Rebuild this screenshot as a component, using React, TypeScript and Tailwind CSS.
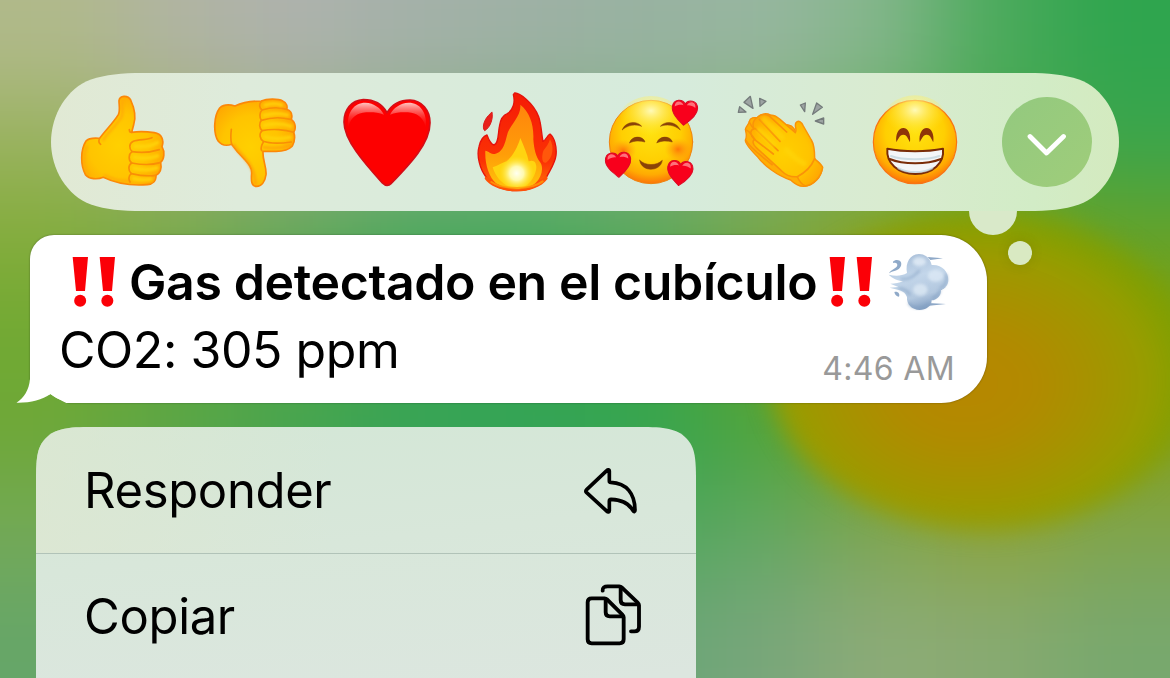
import React from 'react';

const mesh: string[][] = [
  ['#b0b98a', '#b0b4a2', '#aeb2ad', '#a4b1a9', '#9eb1a5', '#98b2a1', '#97b6a0', '#84b68b', '#4caa5c', '#2fa54e'],
  ['#98b25c', '#a0b070', '#98ae80', '#8aad80', '#80ae80', '#80b080', '#80b070', '#66ad60', '#48a84c', '#3ca54c'],
  ['#82ac3a', '#78a948', '#60a656', '#46a85a', '#44a85a', '#58a758', '#78a548', '#8ea420', '#8ca208', '#68a228'],
  ['#70a932', '#60a740', '#50a64a', '#40a550', '#38a552', '#38a54c', '#5ea52c', '#909a00', '#a09400', '#82a00a'],
  ['#6ea838', '#5aa644', '#46a54e', '#33a456', '#31a456', '#34a550', '#4ca440', '#7ca01c', '#909a00', '#84a01c'],
  ['#74a958', '#60a760', '#50a660', '#50a660', '#50a660', '#50a65c', '#62a864', '#7ea656', '#8da542', '#7fa550'],
  ['#66a668', '#60a66c', '#60a66c', '#60a66c', '#60a670', '#68a676', '#78a67b', '#8dab78', '#88aa72', '#78a86e'],
];

function Wallpaper() {
  return (
    <svg className="absolute inset-0 h-full w-full" viewBox="0 0 1170 678" aria-hidden="true">
      <defs>
        <filter id="meshBlur" filterUnits="userSpaceOnUse" x="-300" y="-300" width="1770" height="1278" colorInterpolationFilters="sRGB">
          <feGaussianBlur stdDeviation="46" />
        </filter>
        <filter id="glowBlur" filterUnits="userSpaceOnUse" x="600" y="50" width="800" height="628" colorInterpolationFilters="sRGB">
          <feGaussianBlur stdDeviation="12" />
        </filter>
        <radialGradient id="glow" gradientUnits="userSpaceOnUse" cx="0" cy="0" r="1" gradientTransform="translate(966 384) scale(225 170)">
          <stop offset="0" stopColor="#b78700" />
          <stop offset="0.3" stopColor="#b28a00" />
          <stop offset="0.6" stopColor="#a49400" />
          <stop offset="0.82" stopColor="#979d00" />
          <stop offset="1" stopColor="#7f9f00" stopOpacity="0.9" />
        </radialGradient>
      </defs>
      <g filter="url(#meshBlur)">
        {mesh.map((row, r) =>
          row.map((c, i) => {
            const left = i === 0 ? -250 : i * 117;
            const right = i === 9 ? 1420 : (i + 1) * 117 + 1;
            const top = r === 0 ? -250 : r * 97;
            const bottom = r === 6 ? 928 : (r + 1) * 97 + 1;
            return <rect key={`${r}-${i}`} x={left} y={top} width={right - left} height={bottom - top} fill={c} />;
          }),
        )}
      </g>
      <ellipse cx="984" cy="371" rx="214" ry="158" fill="url(#glow)" filter="url(#glowBlur)" />
    </svg>
  );
}

function SharedPaints() {
  return (
    <svg className="absolute h-0 w-0" aria-hidden="true">
      <defs>
        <radialGradient id="skin" cx="0.45" cy="0.55" r="0.6">
          <stop offset="0" stopColor="#ffd000" />
          <stop offset="0.6" stopColor="#ffc400" />
          <stop offset="1" stopColor="#ffa602" />
        </radialGradient>
        <radialGradient id="face" cx="0.5" cy="0.38" r="0.64">
          <stop offset="0" stopColor="#ffe210" />
          <stop offset="0.55" stopColor="#ffcf02" />
          <stop offset="0.8" stopColor="#ffab02" />
          <stop offset="1" stopColor="#fc6a0a" />
        </radialGradient>
        <radialGradient id="shine" cx="0.5" cy="0.3" r="0.5">
          <stop offset="0" stopColor="#fffab8" />
          <stop offset="1" stopColor="#ffe930" stopOpacity="0" />
        </radialGradient>
        <radialGradient id="blush">
          <stop offset="0" stopColor="#ff6a08" stopOpacity="0.85" />
          <stop offset="1" stopColor="#ff9a10" stopOpacity="0" />
        </radialGradient>
        <linearGradient id="gloss" x1="0" y1="0" x2="0" y2="1">
          <stop offset="0" stopColor="#ffc4c0" />
          <stop offset="1" stopColor="#ff2a24" stopOpacity="0" />
        </linearGradient>
        <radialGradient id="core">
          <stop offset="0" stopColor="#fffff0" />
          <stop offset="0.4" stopColor="#fffab0" />
          <stop offset="1" stopColor="#ffe82a" stopOpacity="0" />
        </radialGradient>
        <linearGradient id="flameOuter" x1="0" y1="0" x2="0" y2="1">
          <stop offset="0" stopColor="#f51a05" />
          <stop offset="0.7" stopColor="#fb3205" />
          <stop offset="1" stopColor="#ff7a08" />
        </linearGradient>
        <linearGradient id="flameMid" x1="0" y1="0" x2="0" y2="1">
          <stop offset="0" stopColor="#ff840c" />
          <stop offset="0.6" stopColor="#ff9e08" />
          <stop offset="1" stopColor="#ffc40a" />
        </linearGradient>
        <linearGradient id="puff" x1="0.3" y1="0" x2="0.6" y2="1">
          <stop offset="0" stopColor="#a9bfd9" />
          <stop offset="0.4" stopColor="#c3d6ea" />
          <stop offset="0.75" stopColor="#b3c8df" />
          <stop offset="1" stopColor="#7f9cc0" />
        </linearGradient>
        <filter id="soft" x="-0.3" y="-0.3" width="1.6" height="1.6" colorInterpolationFilters="sRGB">
          <feGaussianBlur stdDeviation="4" />
        </filter>
        <filter id="softLine" x="-0.3" y="-0.6" width="1.6" height="2.2" colorInterpolationFilters="sRGB">
          <feGaussianBlur stdDeviation="3" />
        </filter>
      </defs>
    </svg>
  );
}

function Cell({ box, label, children }: { box: string; label: string; children: React.ReactNode }) {
  return (
    <button className="h-[138px] w-[132px] shrink-0" aria-label={label}>
      <svg className="block h-full w-full" viewBox={box} fill="none" strokeLinecap="round" strokeLinejoin="round">
        {children}
      </svg>
    </button>
  );
}

function ThumbUp() {
  return (
    <Cell box="-9 -21 396 414" label="Me gusta">
      <path fill="url(#skin)" stroke="#fc8708" strokeWidth="5" d="M177 62C179 46 203 44 212 60C223 84 230 108 221 134L215 157C236 154 262 155 283 158C305 161 313 180 306 200C315 215 313 238 302 247C305 262 302 278 288 286C289 303 278 313 262 314C226 317 176 314 130 292C112 299 88 298 77 285C61 256 61 210 78 183C88 172 104 174 119 175C136 151 160 129 175 104C181 92 177 76 177 62Z" />
      <path stroke="#ffa808" strokeWidth="7" opacity=".8" filter="url(#softLine)" d="M188 62C184 78 190 94 186 108C170 138 144 154 130 180M80 200C68 230 70 262 84 282M135 286C160 300 180 304 208 304" />
      <g stroke="#f98e06" strokeWidth="5">
        <path d="M276 173C264 181 238 177 220 184C206 190 207 206 216 215C206 222 204 240 215 249C204 256 204 272 214 281C204 288 206 300 210 306" />
        <path d="M216 215C242 219 276 216 298 209M215 249C242 254 278 255 300 248M214 281C240 287 268 289 286 286" />
        <path d="M118 177C115 184 118 190 122 193M215 157C210 157 208 153 208 149" />
      </g>
      <g stroke="#ffd50a" strokeWidth="12" opacity=".8" filter="url(#softLine)">
        <path d="M226 199C248 201 276 198 292 188M224 232C248 236 274 235 292 228M224 265C246 270 272 270 290 264M222 296C240 300 258 300 272 298" />
      </g>
    </Cell>
  );
}

function ThumbDown() {
  return (
    <Cell box="387 -21 396 414" label="No me gusta">
      <path fill="url(#skin)" stroke="#fc8708" strokeWidth="5" d="M479 84C492 72 511 74 525 78C548 67 580 63 604 63C620 56 654 55 668 63C680 69 683 80 680 88C696 94 697 108 694 118C708 128 708 148 701 157C706 170 703 186 697 198C686 210 668 214 648 214L609 214C607 240 620 260 618 284C615 306 604 319 590 319C574 319 573 304 575 280C576 262 564 250 551 235C535 220 524 206 515 193C500 198 484 195 475 184C459 160 461 108 479 84Z" />
      <g stroke="#f98e06" strokeWidth="5">
        <path d="M604 65C596 72 598 84 606 90C598 98 598 112 604 121C596 130 598 144 606 152C596 162 600 178 610 184C632 192 666 190 694 186" />
        <path d="M606 90C632 82 660 82 680 88M604 121C632 112 666 112 692 118M606 152C636 146 676 148 701 157" />
        <path d="M515 193C511 178 512 164 514 148M610 186C604 196 602 206 605 212" />
      </g>
      <g stroke="#ffd50a" strokeWidth="11" opacity=".8" filter="url(#softLine)">
        <path d="M616 75C632 70 652 70 664 75M614 106C638 99 664 100 682 105M614 136C640 130 672 132 692 139M616 171C640 178 668 177 690 172" />
      </g>
      <path stroke="#ff9a0a" strokeWidth="10" opacity=".6" filter="url(#softLine)" d="M522 196C540 224 584 250 586 310M612 202C640 206 670 204 692 196" />
    </Cell>
  );
}

function Heart() {
  return (
    <Cell box="3 -21 396 414" label="Corazón">
      <path fill="#fd0000" stroke="#d30d17" strokeWidth="5" d="M201 98C186 71 160 59 130 59C93 61 72 90 72 126C72 180 132 248 187 309C196 318 206 318 214 310C270 252 330 190 330 128C330 90 305 61 270 60C242 60 216 73 201 98Z" />
      <path fill="url(#gloss)" d="M84 144C80 96 102 68 136 68C162 69 182 84 192 104C172 96 148 96 128 98C104 102 90 118 84 144Z" />
      <path fill="url(#gloss)" d="M318 144C322 96 300 68 266 68C240 69 220 84 210 104C230 96 254 96 274 98C298 102 312 118 318 144Z" />
    </Cell>
  );
}

function Fire() {
  return (
    <Cell box="399 -21 396 414" label="Fuego">
      <path fill="url(#flameOuter)" stroke="#e5120c" strokeWidth="4" d="M584 39C598 38 640 68 656 110C664 132 664 160 669 184C679 180 681 166 690 162C703 172 711 200 708 226C705 250 690 270 680 291C664 318 624 332 590 332C554 332 516 320 498 291C480 268 469 228 477 200C481 182 491 168 501 165C505 176 511 192 522 195C536 192 534 162 538 140C541 118 550 105 562 101C580 90 586 66 580 44Z" />
      <path fill="#e8201a" stroke="#dc1a1c" strokeWidth="3" d="M516 97C520 114 512 142 494 152C486 144 491 122 504 108Z" />
      <path fill="#ff5208" d="M496 288L494 296C512 322 554 334 590 334C626 334 664 322 683 296L680 288C660 312 520 312 496 288Z" />
      <path fill="url(#flameMid)" d="M601 74C629 96 642 134 640 178C642 208 648 232 660 246C672 262 666 290 646 310C620 330 560 330 528 310C506 290 494 250 496 212C506 214 512 222 524 222C554 216 556 180 564 156C574 132 604 106 601 74Z" />
      <path fill="#ff5c0c" opacity=".9" d="M690 178C704 200 698 236 678 248C666 252 664 230 670 212C678 202 686 192 690 178Z" />
      <path fill="#ffd410" d="M601 174C612 200 622 222 626 244C644 236 652 252 648 270C644 292 626 322 594 326C556 324 528 296 518 262C536 256 546 248 560 244C578 228 592 204 601 174Z" />
      <ellipse cx="590" cy="280" rx="52" ry="52" fill="url(#core)" />
      <path stroke="#ff9c08" strokeWidth="6" opacity=".8" d="M514 306C550 330 634 330 668 304" />
    </Cell>
  );
}

function MiniHeart({ x, y, turn }: { x: number; y: number; turn: number }) {
  return (
    <g transform={`translate(${x} ${y}) rotate(${turn})`}>
      <path fill="#f8001c" stroke="#dc0a26" strokeWidth="3" d="M0 -24C-8 -39 -36 -39 -38 -13C-39 8 -16 26 -1 40C16 27 39 8 38 -13C36 -38 8 -39 0 -24Z" />
      <path fill="#ff8d93" opacity=".8" d="M-31 -14C-33 -33 -12 -36 -5 -20C-12 -22 -24 -20 -31 -14ZM31 -14C33 -33 12 -36 5 -20C12 -22 24 -20 31 -14Z" />
    </g>
  );
}

function LovingFace() {
  return (
    <Cell box="-15 -21 396 414" label="Cara con corazones">
      <circle cx="183" cy="186" r="125" fill="url(#face)" stroke="#ee8410" strokeWidth="3" />
      <ellipse cx="183" cy="122" rx="98" ry="74" fill="url(#shine)" />
      <ellipse cx="100" cy="212" rx="40" ry="34" fill="url(#blush)" />
      <ellipse cx="264" cy="208" rx="40" ry="34" fill="url(#blush)" />
      <g fill="#8a4308" stroke="#8a4308" strokeWidth="1.500">
        <path d="M97 149C104 128 136 118 155 139C136 132 116 134 97 149Z" />
        <path d="M270 149C262 128 230 118 211 139C230 132 252 134 270 149Z" />
        <path d="M119 188C124 166 160 166 165 186C150 182 134 182 119 188Z" />
        <path d="M201 188C206 166 242 166 247 186C232 182 216 182 201 188Z" />
        <path d="M149 241C166 258 200 258 217 241C212 276 154 278 149 241Z" />
      </g>
      <MiniHeart x={284} y={96} turn={4} />
      <MiniHeart x={85} y={252} turn={-4} />
      <MiniHeart x={270} y={277} turn={5} />
    </Cell>
  );
}

function Clap() {
  return (
    <Cell box="381 -21 396 414" label="Aplausos">
      <path fill="#ffae04" stroke="#fa8f08" strokeWidth="4" d="M574 140C586 130 604 134 612 146L640 200L696 260C698 290 670 318 642 319C624 320 612 310 602 300C560 286 520 254 504 232C486 214 464 192 466 180C472 170 468 158 466 148C468 138 476 134 478 124C480 112 492 112 504 112C514 98 532 100 542 105Z" />
      <path fill="url(#skin)" stroke="#fa9308" strokeWidth="4.500" d="M502 112C516 98 530 104 538 108C550 100 562 112 570 118L616 158C622 148 612 138 618 128C626 118 636 128 640 138L664 180C674 196 674 218 674 236C684 246 694 252 698 262C694 292 668 314 646 318C634 312 626 300 622 290C602 292 586 284 574 272L498 202C488 192 486 182 494 178C480 166 478 150 492 146C484 130 494 116 502 112Z" />
      <g stroke="#fa9308" strokeWidth="5">
        <path d="M508 118L570 184M496 146L564 212M494 179L550 222M540 110L590 156" />
        <path d="M622 290C642 280 664 260 674 236M478 126C482 134 486 142 492 146M468 150C478 152 484 164 494 178M468 182C480 204 520 232 546 254" />
      </g>
      <path stroke="#ffd60a" strokeWidth="16" opacity=".6" filter="url(#soft)" d="M590 210C612 232 628 246 642 250M522 118L576 172M508 150L552 192" />
      <g fill="#9da4a3" stroke="#747b7b" strokeWidth="4">
        <path d="M481 49L462 67L489 85ZM509 55L528 64L510 79ZM449 80L445 97L468 96Z" />
        <path d="M680 69L697 82L668 103ZM646 69L631 75L644 95ZM701 114L701 132L676 123Z" />
      </g>
    </Cell>
  );
}

function Grin() {
  return (
    <Cell box="-3 9 396 414" label="Sonrisa">
      <circle cx="195" cy="216" r="125" fill="url(#face)" stroke="#f87414" strokeWidth="3.500" />
      <ellipse cx="195" cy="150" rx="96" ry="74" fill="url(#shine)" />
      <path fill="#8e3508" d="M139 216C136 192 146 174 160 174C174 174 183 192 180 216C175 210 172 194 160 194C148 194 144 210 139 216Z" />
      <path fill="#8e3508" d="M209 216C206 192 216 174 230 174C244 174 253 192 250 216C245 210 242 194 230 194C218 194 214 210 209 216Z" />
      <path fill="#f4f6f8" stroke="#7a2c08" strokeWidth="6" d="M112 236C160 246 230 246 279 236C284 280 248 312 196 312C144 312 108 280 112 236Z" />
      <path stroke="#7a2c08" strokeWidth="6" d="M119 267C160 284 230 284 273 267" />
      <path stroke="#b9d0d8" strokeWidth="6" opacity=".65" d="M123 258C160 271 230 271 268 258M145 295C174 310 218 310 247 295" />
    </Cell>
  );
}

function DoubleBang({ className }: { className: string }) {
  return (
    <svg className={className} viewBox="217 106 132 153" role="img" aria-label="‼️" fill="#fb0007">
      <path d="M219 109H265L256 211H229ZM300 109H346L337 211H310Z" />
      <circle cx="241.500" cy="240" r="18" />
      <circle cx="323" cy="240" r="18" />
    </svg>
  );
}

function Dash() {
  return (
    <svg className="ml-[15px] mt-[5px] h-[58px] w-[62px]" viewBox="299 84 186 174" role="img" aria-label="💨">
      <path fill="#8fa9c8" d="M418 96L464 100L426 105ZM420 234L473 237L416 243ZM440 190L472 187L450 200Z" />
      <path fill="#8fa9c8" d="M314 110C320 103 334 103 338 112C342 124 332 136 318 138C310 140 306 142 302 145C308 134 320 132 326 124C330 114 320 112 314 114ZM318 201C328 198 336 206 332 215C324 214 320 210 318 201Z" />
      <path fill="url(#puff)" d="M301 149C320 154 340 154 356 144C350 112 366 88 392 87C414 87 426 102 430 120C462 118 480 140 480 164C480 180 470 190 458 194C460 212 444 226 430 226C430 244 412 255 394 255C370 254 354 238 356 216C352 206 346 200 334 196L304 188L330 186L306 176C320 176 334 174 344 168C328 168 312 160 301 149Z" />
      <g filter="url(#soft)">
        <ellipse cx="393" cy="110" rx="20" ry="13" fill="#e0ebf6" opacity=".85" />
        <ellipse cx="442" cy="152" rx="24" ry="18" fill="#dbe8f5" opacity=".85" />
        <ellipse cx="396" cy="194" rx="22" ry="18" fill="#dce8f4" opacity=".8" />
        <path fill="none" stroke="#7f9cc0" strokeWidth="7" strokeLinecap="round" opacity=".6" d="M340 162C360 164 380 152 392 138M362 236C376 252 404 252 422 236M434 218C446 214 454 204 454 196M334 190C348 192 358 198 364 208M474 150C478 168 470 182 458 188" />
      </g>
    </svg>
  );
}

function ReplyIcon() {
  return (
    <svg className="mt-px h-[48px] w-[56px]" viewBox="68 78 168 144" fill="none" stroke="#000" strokeWidth="11" strokeLinejoin="round" strokeLinecap="round">
      <path d="M147 90C147 86 143 85 140 88L79 146C76 149 76 152 79 155L140 211C143 214 147 213 147 209V180C147 177 149 175 152 175C184 176 206 187 218 209C221 214 224 213 224 208C224 158 199 126 151 124C148 124 147 122 147 120Z" />
    </svg>
  );
}

function CopyIcon() {
  return (
    <svg className="-mt-[5px] h-[64px] w-[58px]" viewBox="76 428 174 192" fill="none" stroke="#000" strokeWidth="11.500" strokeLinejoin="round" strokeLinecap="round">
      <path d="M129 451C128 442 134 438 144 438H179C182 438 184 439 186 441L234 487C237 490 238 492 238 495V559C238 568 233 573 224 573H214" />
      <path d="M183 441V479C183 487 188 492 196 492H235" />
      <path d="M96 474H135C138 474 140 475 142 477L188 523C191 526 192 528 192 531V597C192 605 188 609 180 609H96C88 609 84 605 84 597V486C84 478 88 474 96 474Z" />
      <path d="M138 477V516C138 524 142 528 150 528H189" />
    </svg>
  );
}

function ReactionBar() {
  return (
    <div className="relative ml-[51px] h-[138px] w-[1068px]">
      <div className="flex h-[138px] w-[1068px] bg-[linear-gradient(93deg,#e1e9d4_0%,#deebdb_18%,#d9ebdb_40%,#d6ebdc_58%,#d9ebd0_78%,#d2ecc6_92%,#d4eabf_100%)] px-[6px] [clip-path:path('M0_69C0_42_16_15_40_6.500C55_1.500_70_0_92_0H976C998_0_1013_1.500_1028_6.500C1052_15_1068_42_1068_69C1068_96_1052_123_1028_131.500C1013_136.500_998_138_976_138H92C70_138_55_136.500_40_131.500C16_123_0_96_0_69Z')]">
        <ThumbUp />
        <ThumbDown />
        <Heart />
        <Fire />
        <LovingFace />
        <Clap />
        <Grin />
        <div className="flex w-[132px] shrink-0 items-center justify-center">
          <button className="flex h-[90px] w-[90px] items-center justify-center rounded-full bg-linear-to-br from-[#93c97f] to-[#9fcd7a]" aria-label="Más reacciones">
            <svg className="mt-[5px] h-[24px] w-[40px]" viewBox="0 0 40 24" fill="none" stroke="#fff" strokeWidth="4.800" strokeLinecap="round" strokeLinejoin="round">
              <path d="M3 3.500L19.500 20L36.500 3.500" />
            </svg>
          </button>
        </div>
      </div>
      <div className="absolute left-[918px] top-[138px] h-[24px] w-[48px] rounded-b-full bg-[#d9e9c9]" />
      <div className="absolute left-[957px] top-[168px] h-[24px] w-[24px] rounded-full bg-[#d9e9c2] shadow-[0_0_12px_rgba(60,80,0,0.18)]" />
    </div>
  );
}

function MessageBubble() {
  return (
    <div className="relative ml-[30px] mt-[24px] h-[168px] w-[957px] rounded-[24px_46px_46px_0] bg-white pl-[42px] pr-[32px] pt-[13px] shadow-[0_0_2px_rgba(0,0,0,0.4)] [clip-path:path('M-5_-5H970V175H47C37_167_28_165_20.500_159C14_163_8_155_0_145H-5Z')]">
      <div className="flex h-[68px] items-start">
        <DoubleBang className="mt-[8px] h-[51px] w-[44px]" />
        <span className="ml-[13px] w-[687px] whitespace-nowrap text-[50px] font-semibold leading-[68px] tracking-[-0.38px]">Gas detectado en el cubículo</span>
        <DoubleBang className="ml-[13px] mt-[8px] h-[51px] w-[44px]" />
        <Dash />
      </div>
      <div className="-ml-[13px] flex items-start justify-between">
        <span className="text-[50px] leading-[68px] tracking-[-0.45px]">CO2: 305 ppm</span>
        <span className="mt-[19px] text-[32px] leading-[68px] tracking-[0.35px] text-[#999]">4:46 AM</span>
      </div>
    </div>
  );
}

export default function App() {
  return (
    <main className="relative h-[678px] w-[1170px] overflow-hidden bg-[#6ea83a] font-['Inter',sans-serif] text-black">
      <Wallpaper />
      <SharedPaints />
      <div className="relative flex flex-col pt-[73px]">
        <ReactionBar />
        <div className="relative">
          <MessageBubble />
          <svg className="absolute left-[15px] top-[164px] h-[30px] w-[70px]" viewBox="15 375 70 30" aria-hidden="true">
            <path fill="#fff" d="M30 375V379C29 390 24 398 16.500 402.700C30 403 42 400 50.500 394C58 400 66 402.500 78 403H85V375Z" />
          </svg>
        </div>
        <div className="ml-[36px] mt-[24px] h-[300px] w-[660px] bg-[linear-gradient(174deg,#d3e7d6_0%,#d8e7da_40%,#dce6df_85%)] [clip-path:path('M0_52C0_28_2_20_9_12C17_3_28_0_52_0H608C632_0_643_3_651_12C658_20_660_28_660_52V300H0Z')]">
          <div className="flex h-[127px] items-center justify-between border-b border-[#b1c3b8] bg-linear-to-r from-[#dfe7cf]/60 to-transparent to-45% pl-[48px] pr-[57px]">
            <span className="mt-[2px] text-[49px] leading-[68px] tracking-[-0.35px]">Responder</span>
            <ReplyIcon />
          </div>
          <div className="flex h-[126px] items-center justify-between pl-[48px] pr-[53px]">
            <span className="text-[49px] leading-[68px] tracking-[-0.35px]">Copiar</span>
            <CopyIcon />
          </div>
        </div>
      </div>
    </main>
  );
}
